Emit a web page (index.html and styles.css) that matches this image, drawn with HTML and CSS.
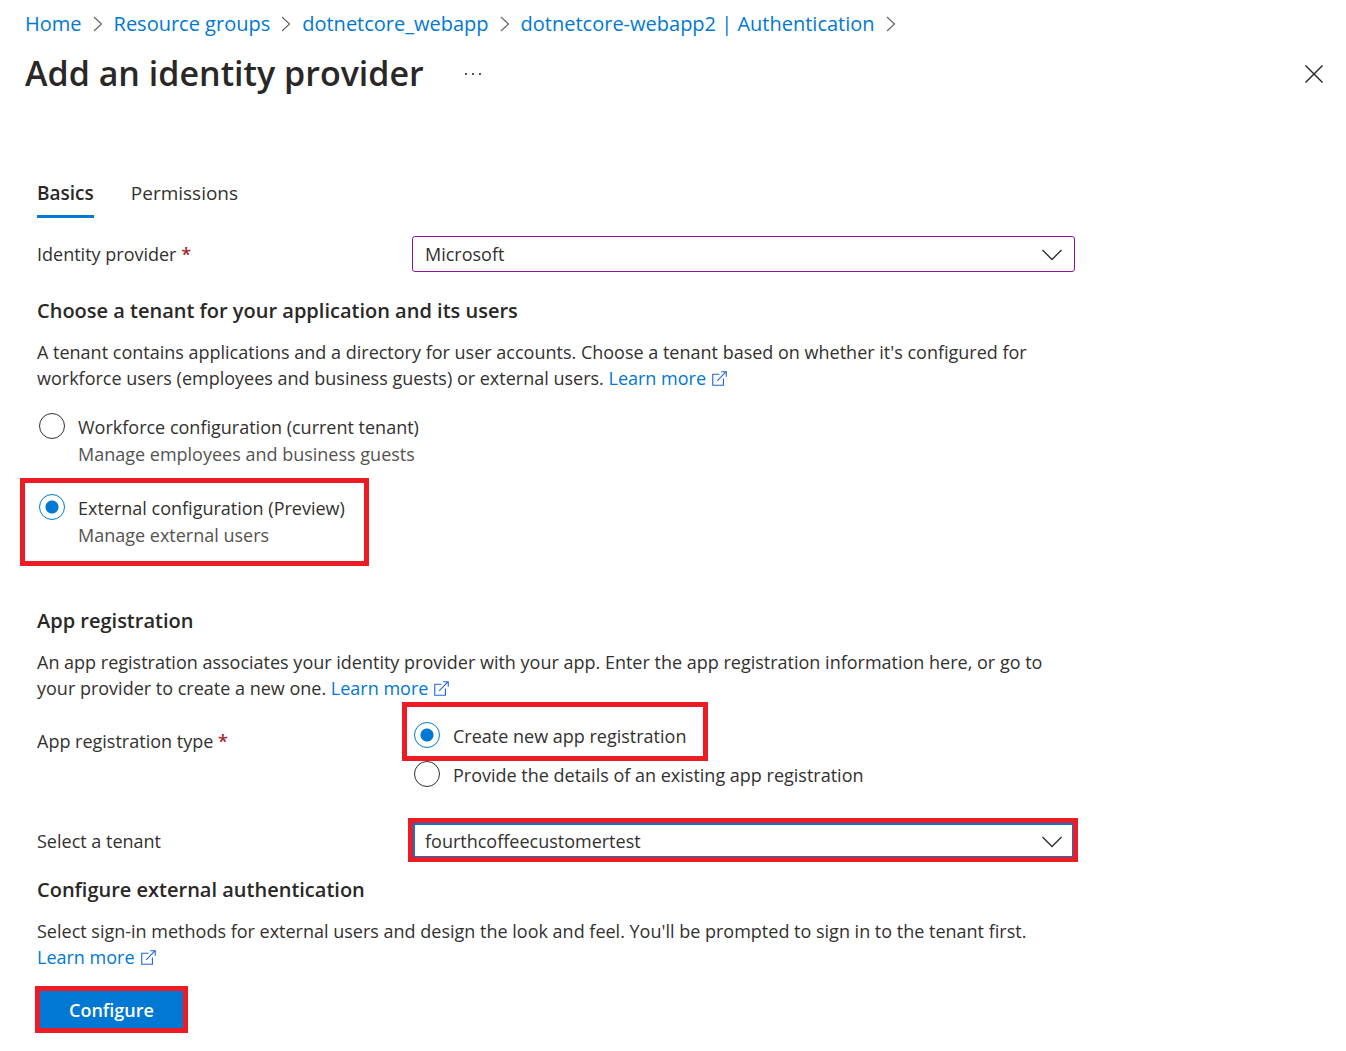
FILE: index.html
```html
<!DOCTYPE html>
<html lang="en">
<head>
<meta charset="utf-8">
<meta name="viewport" content="width=device-width, initial-scale=1">
<title>Add an identity provider</title>
<link rel="stylesheet" href="styles.css">
</head>
<body>
<svg class="sprite" aria-hidden="true">
  <symbol id="chevron-right" viewBox="0 0 10 16"><path d="M1 1l7.5 7L1 15" fill="none" stroke="currentColor" stroke-width="1.2"/></symbol>
  <symbol id="chevron-down" viewBox="0 0 20 12"><path d="M.5 1l9.500 9.500L19.500 1" fill="none" stroke="currentColor" stroke-width="1.400"/></symbol>
  <symbol id="external" viewBox="0 0 16 16"><path d="M8 3.500H.8v11.700h11.400V8M5.500 10.500L14.800 1M9.800.8h5.400v5.400" fill="none" stroke="currentColor" stroke-width="1.200"/></symbol>
</svg>
<header class="page-header">
  <nav class="breadcrumb" aria-label="Breadcrumb">
    <a href="#">Home</a><svg class="crumb-sep"><use href="#chevron-right"/></svg>
    <a href="#">Resource groups</a><svg class="crumb-sep"><use href="#chevron-right"/></svg>
    <a href="#">dotnetcore_webapp</a><svg class="crumb-sep"><use href="#chevron-right"/></svg>
    <a href="#">dotnetcore-webapp2 | Authentication</a><svg class="crumb-sep"><use href="#chevron-right"/></svg>
  </nav>
  <div class="title-row">
    <h1>Add an identity provider</h1>
    <button class="icon-button" type="button" aria-label="More"><svg width="18" height="4" viewBox="0 0 18 4"><path d="M1 1h2v2H1zM8 1h2v2H8zM15 1h2v2h-2z" fill="#555"/></svg></button>
    <button class="icon-button close" type="button" aria-label="Close"><svg width="18" height="18" viewBox="0 0 18 18"><path d="M.5.5l17 17M17.500.5l-17 17" stroke="#222" stroke-width="1.400"/></svg></button>
  </div>
</header>
<main class="content">
  <div class="tabs" role="tablist">
    <button class="tab active" type="button" role="tab" aria-selected="true">Basics</button>
    <button class="tab" type="button" role="tab" aria-selected="false">Permissions</button>
  </div>
  <div class="field">
    <label for="provider">Identity provider <span class="required">*</span></label>
    <div class="dropdown">
      <select id="provider" class="edited"><option>Microsoft</option></select>
      <svg class="arrow"><use href="#chevron-down"/></svg>
    </div>
  </div>

  <section>
    <h2>Choose a tenant for your application and its users</h2>
    <p>A tenant contains applications and a directory for user accounts. Choose a tenant based on whether it's configured for workforce users (employees and business guests) or external users. <a href="#">Learn more<svg class="external"><use href="#external"/></svg></a></p>
    <div class="tenant-options">
      <label class="option"><input type="radio" name="tenant-type"><span>Workforce configuration (current tenant)<small>Manage employees and business guests</small></span></label>
      <label class="option highlight highlight-tenant"><input type="radio" name="tenant-type" checked><span>External configuration (Preview)<small>Manage external users</small></span></label>
    </div>
  </section>

  <section class="registration">
    <h2>App registration</h2>
    <p>An app registration associates your identity provider with your app. Enter the app registration information here, or go to your provider to create a new one. <a href="#">Learn more<svg class="external"><use href="#external"/></svg></a></p>
    <div class="field type-field" role="radiogroup" aria-labelledby="type-label">
      <span id="type-label" class="group-label">App registration type <span class="required">*</span></span>
      <div class="type-options">
        <label class="option highlight highlight-type"><input type="radio" name="registration" checked><span>Create new app registration</span></label>
        <label class="option"><input type="radio" name="registration"><span>Provide the details of an existing app registration</span></label>
      </div>
    </div>
    <div class="field tenant-field">
      <label for="tenant">Select a tenant</label>
      <div class="dropdown highlight highlight-select">
        <select id="tenant" class="focused"><option>fourthcoffeecustomertest</option></select>
        <svg class="arrow"><use href="#chevron-down"/></svg>
      </div>
    </div>
  </section>

  <section class="external-auth">
    <h2>Configure external authentication</h2>
    <p>Select sign-in methods for external users and design the look and feel. You'll be prompted to sign in to the tenant first. <a href="#">Learn more<svg class="external"><use href="#external"/></svg></a></p>
    <div class="highlight highlight-button"><button class="primary" type="button">Configure</button></div>
  </section>
</main>
</body>
</html>
```
FILE: styles.css
```css
* { box-sizing: border-box; }
body {
  margin: 0;
  background: #fff;
  color: #323130;
  font: 18px/26px "Open Sans", "Noto Sans", sans-serif;
}
.sprite { display: none; }
a { color: #0078d4; text-decoration: none; }
button { font: inherit; color: inherit; border: 0; background: none; padding: 0; cursor: pointer; }

.page-header { padding: 8px 23px 0 25px; }
.breadcrumb { display: flex; align-items: center; gap: 11px; font-size: 20px; line-height: 32px; white-space: nowrap; }
.crumb-sep { width: 10px; height: 16px; color: #666; }
.title-row { display: flex; align-items: center; margin-top: 10px; }
h1 { margin: 0 40px 0 0; padding-bottom: 2px; font-size: 34px; line-height: 46px; font-weight: 600; color: #292827; }
.icon-button { display: flex; }
.close { margin-left: auto; }

.content { max-width: 1112px; padding: 82px 37px 18px; }
.tabs { display: flex; gap: 37px; font-size: 19px; }
.tab { padding-bottom: 9px; border-bottom: 3px solid transparent; }
.tab.active { font-weight: 600; border-color: #0078d4; color: #292827; }

.field { display: grid; grid-template-columns: 375px minmax(0, 1fr); align-items: center; margin-top: 18px; }
.required { color: #a4262c; font-weight: 600; }
.dropdown { position: relative; }
select {
  display: block;
  width: 100%;
  height: 36px;
  padding: 0 48px 0 12px;
  appearance: none;
  border: 1px solid #8a8886;
  border-radius: 3px;
  background: #fff;
  color: inherit;
  font: inherit;
}
.edited { border-color: #881798; }
.focused { border: 3px solid #0078d4; border-top-width: 2px; border-radius: 0; padding-left: 10px; }
.arrow { position: absolute; top: 13px; right: 13px; width: 20px; height: 12px; pointer-events: none; }

h2 { margin: 0; font-size: 20px; line-height: 26px; font-weight: 600; color: #292827; }
p { margin: 15px 0 0; }
section { margin-top: 26px; }
.external { width: 15px; height: 15px; margin-left: 6px; vertical-align: -1px; color: #2266e3; }

.option { position: relative; display: flex; gap: 13px; width: fit-content; }
.option span { padding-top: 1px; }
.option small { display: block; font-size: 18px; color: #555351; }
.option input {
  flex: none;
  width: 26px;
  height: 26px;
  margin: 0;
  appearance: none;
  border: 1px solid #323130;
  border-radius: 50%;
}
.option input:checked { border-color: #0078d4; background: radial-gradient(circle, #0078d4 6px, transparent 7px); }
.tenant-options { display: grid; gap: 26px; margin: 22px 0 0 2px; line-height: 27px; }

.registration { margin-top: 59px; }
.type-field { align-items: start; margin-top: 21px; }
.group-label { padding-top: 6px; }
.type-options { display: grid; gap: 12px; padding-left: 2px; }
.tenant-field { margin-top: 35px; }
.external-auth { margin-top: 18px; }

.highlight { position: relative; }
.highlight::after { content: ""; position: absolute; border: 5px solid #ed1c24; pointer-events: none; }
.highlight-tenant::after { inset: -16px -24px -17px -19px; }
.highlight-type::after { inset: -20px -22px -12px -12px; }
.highlight-select::after { inset: -5px -3px -3px -4px; }
.highlight-button { width: fit-content; margin-top: 21px; }
.highlight-button::after { inset: -5px -2px -4px -2px; }
.primary { display: block; height: 38px; padding: 0 32px; background: #0078d4; color: #fff; font-weight: 600; }
```
